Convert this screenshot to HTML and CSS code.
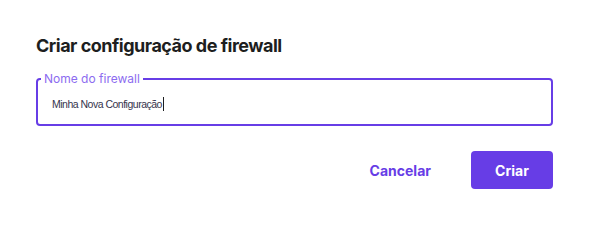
FILE: index.html
```html
<!DOCTYPE html>
<html>
<head>
  <meta charset="UTF-8">
  <title>Criar configuração de firewall</title>
  <link rel="stylesheet" href="styles.css">
</head>
<body>
  <div class="modal">
    <h2 class="modal-title">Criar configuração de firewall</h2>

    <fieldset class="field">
      <legend class="field-label">Nome do firewall</legend>
      <div class="field-value">Minha Nova Configuração<span class="caret"></span></div>
    </fieldset>

    <div class="actions">
      <button class="btn btn-text">Cancelar</button>
      <button class="btn btn-primary">Criar</button>
    </div>
  </div>
</body>
</html>
```

FILE: styles.css
```css
body {
  margin: 0;
  background: #fff;
  font-family: Inter, "Noto Sans", sans-serif;
  color: #2f1c6a;
}
.modal {
  width: 517px;
  padding: 35px 39px 0 36px;
}
.modal-title {
  margin: 0;
  font-size: 18px;
  font-weight: 700;
  line-height: 22px;
  color: #1d1e20;
  letter-spacing: -0.5px;
}
.field {
  box-sizing: border-box;
  margin: 16px 0 0;
  padding: 0 14px;
  height: 53px;
  border: 2px solid #673de6;
  border-radius: 4px;
}
.field-label {
  padding: 0 3px;
  margin-left: -11px;
  font-size: 12px;
  line-height: 12px;
  color: #8c6cf0;
}
.field-value {
  margin-top: 11px;
  font-family: "Liberation Sans", sans-serif;
  font-size: 10.5px;
  line-height: 16px;
  letter-spacing: -0.5px;
  color: #36344d;
}
.caret {
  display: inline-block;
  width: 1px;
  height: 14px;
  margin-left: 1px;
  background: #1d1e20;
  vertical-align: -3px;
}
.actions {
  display: flex;
  justify-content: flex-end;
  align-items: center;
  gap: 24px;
  margin-top: 25px;
}
.btn {
  font-family: inherit;
  font-size: 14px;
  font-weight: 700;
  border: 0;
  border-radius: 4px;
  height: 38px;
  cursor: pointer;
}
.btn-text {
  background: none;
  color: #673de6;
  padding: 0 16px;
}
.btn-primary {
  background: #673de6;
  color: #fff;
  width: 82px;
}
```
